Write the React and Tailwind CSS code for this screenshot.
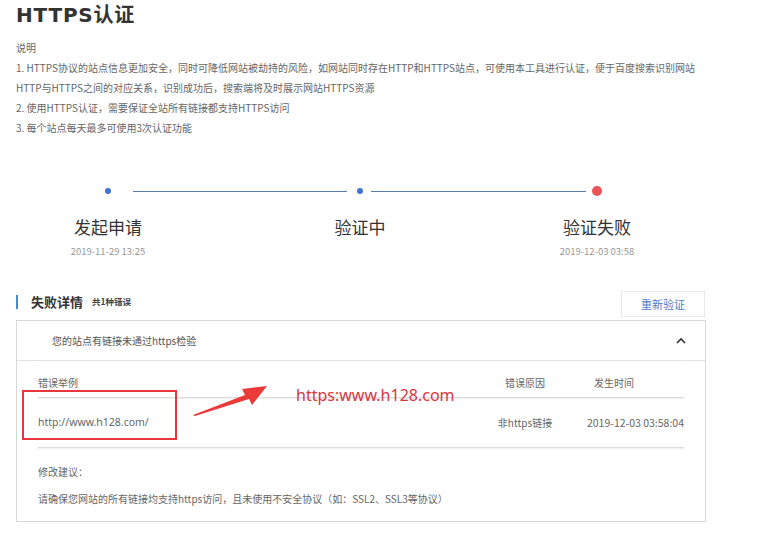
import React from "react";

const cjk = { fontFamily: '"Noto Sans CJK SC", "Noto Sans", sans-serif' };

export default function App() {
  return (
    <div className="relative w-[777px] h-[550px] bg-white overflow-hidden text-[#666]" style={cjk}>
      {/* Title */}
      <h1
        className="pl-4 h-[30px] leading-[30px] text-[20px] font-bold text-[#333] tracking-[0.8px]"
        style={{ fontFamily: '"DejaVu Sans", "Noto Sans CJK SC", sans-serif' }}
      >
        HTTPS认证
      </h1>

      {/* Description */}
      <div className="pl-4 mt-[8px] text-[10px] leading-[20px] text-[#666]">
        <p>说明</p>
        <p>1. HTTPS协议的站点信息更加安全，同时可降低网站被劫持的风险，如网站同时存在HTTP和HTTPS站点，可使用本工具进行认证，便于百度搜索识别网站</p>
        <p>HTTP与HTTPS之间的对应关系，识别成功后，搜索端将及时展示网站HTTPS资源</p>
        <p>2. 使用HTTPS认证，需要保证全站所有链接都支持HTTPS访问</p>
        <p>3. 每个站点每天最多可使用3次认证功能</p>
      </div>

      {/* Steps */}
      <div className="mt-[48px] flex items-center h-[10px]">
        <div className="ml-[105px] w-[6px] h-[6px] rounded-full bg-[#3f74cf]" />
        <div className="ml-[22px] w-[214px] h-px bg-[#5a7eab]" />
        <div className="ml-[10px] w-[6px] h-[6px] rounded-full bg-[#3f74cf]" />
        <div className="ml-[8px] w-[215px] h-px bg-[#5a7eab]" />
        <div className="ml-[6px] w-[10px] h-[10px] rounded-full bg-[#eb5358]" />
      </div>
      <div className="mt-[19px] flex">
        <div className="ml-[58px] w-[100px] flex flex-col items-center">
          <span className="text-[17px] leading-[24px] text-[#333]">发起申请</span>
          <span className="text-[9.5px] leading-[24px] text-[#999]">2019-11-29 13:25</span>
        </div>
        <div className="ml-[152px] w-[100px] flex flex-col items-center">
          <span className="text-[17px] leading-[24px] text-[#333]">验证中</span>
        </div>
        <div className="ml-[137px] w-[100px] flex flex-col items-center">
          <span className="text-[17px] leading-[24px] text-[#333]">验证失败</span>
          <span className="text-[9.5px] leading-[24px] text-[#999]">2019-12-03 03:58</span>
        </div>
      </div>

      {/* Section heading */}
      <div className="mt-[28px] flex items-center w-[705px] h-[26px]">
        <div className="flex items-center mb-[5px]">
          <div className="ml-4 w-[2px] h-[14px] bg-[#4a8bd0]" />
          <span className="ml-[13px] text-[13px] font-bold text-[#333]">失败详情</span>
          <span className="ml-[9px] text-[8.5px] font-bold text-[#444]">共1种错误</span>
        </div>
        <button className="ml-auto w-[84px] h-[26px] border border-[#e6e9ee] text-[11px] text-[#4a7cc9] bg-white">
          重新验证
        </button>
      </div>

      {/* Card */}
      <div className="relative mt-[3px] ml-4 w-[690px] h-[202px] border border-[#d8d8d8]">
        <div className="flex items-center h-[40px] border-b border-[#e2e2e2] pl-[35px] pr-[19px]">
          <span className="text-[10px] text-[#555]">您的站点有链接未通过https检验</span>
          <svg className="ml-auto" width="10" height="7" viewBox="0 0 10 7">
            <polyline points="1,6 5,2 9,6" fill="none" stroke="#333" strokeWidth="1.6" />
          </svg>
        </div>

        <div className="px-[21px]">
          <div className="flex pt-[12px] pb-[4px] leading-[20px] border-b border-[#dcdcdc] shadow-[0_1px_1px_rgba(0,0,0,0.06)] text-[10px] text-[#666]">
            <span className="flex-1">错误举例</span>
            <span className="w-[70px] text-center">错误原因</span>
            <span className="w-[124px] pl-[34px]">发生时间</span>
          </div>
          <div className="flex items-center h-[50px] border-b border-[#dcdcdc] shadow-[0_1px_1px_rgba(0,0,0,0.06)] text-[10px] text-[#666]">
            <span className="flex-1 text-[10.5px]" style={{ fontFamily: '"Noto Sans", sans-serif' }}>http://www.h128.com/</span>
            <span className="w-[70px] text-center">非https链接</span>
            <span className="w-[124px] text-right text-[10.5px]">2019-12-03 03:58:04</span>
          </div>
          <p className="mt-[13px] text-[10px] leading-[22px] text-[#666]">修改建议：</p>
          <p className="mt-[5px] text-[10px] leading-[22px] text-[#666]">
            请确保您网站的所有链接均支持https访问，且未使用不安全协议（如：SSL2、SSL3等协议）
          </p>
        </div>

        {/* Annotations */}
        <div className="absolute left-[5px] top-[69px] w-[155px] h-[50px] border-2 border-[#e8373c]" />
        <svg className="absolute left-[176px] top-[62px]" width="76" height="34" viewBox="0 0 76 34">
          <polygon points="0,32 52,12 49,6 74,3 59,22 56,16 2,33" fill="#ea3a3a" />
        </svg>
        <span
          className="absolute left-[279px] top-[63px] text-[16px] leading-[22px] text-[#d9363e]"
          style={{ fontFamily: '"Noto Sans", sans-serif' }}
        >
          https:www.h128.com
        </span>
      </div>
    </div>
  );
}
